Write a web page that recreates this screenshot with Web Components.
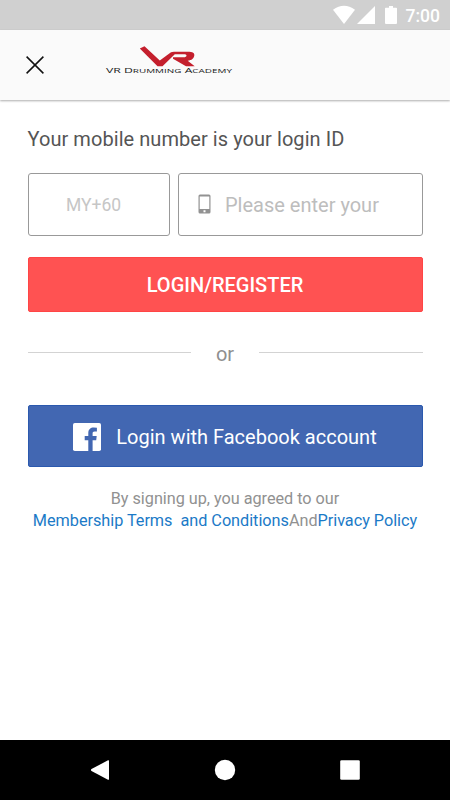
<!DOCTYPE html>
<html lang="en">
<head>
<meta charset="utf-8">
<title>Login</title>
<style>
html,body{margin:0;height:100%;background:#fff;font-family:Roboto,"Liberation Sans",sans-serif}
</style>
</head>
<body>
<login-screen></login-screen>
<script>
const define = (name, html) => {
  const t = document.createElement('template');
  t.innerHTML = html;
  customElements.define(name, class extends HTMLElement {
    constructor() {
      super();
      this.attachShadow({ mode: 'open' }).append(t.content.cloneNode(true));
    }
  });
};

define('status-bar', `
<style>
:host{display:block;height:30px;background:#d0d0d0;color:#fff}
.row{display:flex;justify-content:flex-end;align-items:center;height:30px;padding-right:10px}
svg{display:block;margin-right:8px}
span{font-size:17.5px;font-weight:500;line-height:30px;padding-top:1px}
</style>
<div class="row">
<svg width="65" height="30" viewBox="0 0 65 30" fill="#fff"><path d="M0 9.8Q11 1.8 22 9.8L11 24Z"/><path d="M24 24L42 6V24Z"/><path d="M56 6h4v1.8h3.2q.8 0 .8.8V23q0 1-1 1H53q-1 0-1-1V8.600q0-.8.8-.8H56Z"/></svg>
<span>7:00</span></div>`);

define('brand-logo', `
<style>:host{display:block}svg{display:block}text{font-family:"Open Sans","DejaVu Sans",sans-serif;fill:#222}</style>
<svg width="130" height="32" viewBox="0 0 130 32">
<path fill="#c41f2d" d="M34.800 3.500L39.500 1.200L54.800 15.500L66 7.300Q67 6.700 69 6.700H82.500C88 6.700 89.800 8 89.300 10.500C88.800 13.500 87 15.200 82.700 15.700L89.700 21.200H81L68 13.700V12.300H78.500C80.500 12.300 81.500 11.500 81.500 10.500C81.500 9.500 80.500 9.200 78.500 9.200H69.800L57.500 21.200H52.500Z"/>
<text x="1" y="27.800" font-size="6.400" textLength="126" lengthAdjust="spacingAndGlyphs">V<tspan>R</tspan> D<tspan font-size="5.200">RUMMING</tspan> A<tspan font-size="5.200">CADEMY</tspan></text>
</svg>`);

define('app-header', `
<style>
:host{display:flex;height:70px;background:#fafafa;box-shadow:0 1px 2px rgba(0,0,0,.32);align-items:flex-start}
.x{display:block;margin:26px 0 0 26px}
brand-logo{margin:15px 0 0 61px}
</style>
<svg class="x" width="18" height="18" viewBox="0 0 18 18"><path d="M.6.6L17.400 17.400M17.400.6L.6 17.400" stroke="#111" stroke-width="1.500"/></svg>
<brand-logo></brand-logo>`);

define('phone-fields', `
<style>
:host{display:flex;gap:8px;height:62px}
div{box-sizing:border-box;height:62.500px;border:1px solid #999;border-radius:3px;display:flex;align-items:center;color:#bdbdbd}
.code{width:142.500px;padding-left:37.500px;font-size:17.500px;color:#c6c6c6}
.num{flex:1;padding-left:19px;font-size:20px}
svg{margin-right:14px}
span{position:relative;top:1px}
</style>
<div class="code"><span>MY+60</span></div>
<div class="num"><svg width="13" height="20" viewBox="0 0 13 20"><path fill="#929292" fill-rule="evenodd" d="M2 .5H11Q12.500.5 12.500 2V18Q12.500 19.500 11 19.500H2Q.5 19.500.5 18V2Q.5.5 2 .5ZM1.700 2.500V15H11.300V2.500ZM5.500 16.300V18.200H7.500V16.300Z"/></svg><span>Please enter your</span></div>`);

define('action-button', `
<style>
:host{display:flex;align-items:center;justify-content:center;box-sizing:border-box;border-radius:2px;color:#fff;font-size:20px;border:1px solid var(--edge);background:var(--fill)}
::slotted(svg){display:block}
</style><slot></slot>`);

define('or-divider', `
<style>
:host{display:flex;align-items:center;justify-content:space-between;height:24px;color:#8f8f8f;font-size:20px}
i{width:163.500px;height:1px;background:#d3d3d3;position:relative;top:-1px}
span{line-height:24px;position:relative;top:1px}
</style><i></i><span>or</span><i></i>`);

define('terms-note', `
<style>
:host{display:block;text-align:center;color:#919191;font-size:16.250px;letter-spacing:-.03px;line-height:22px}
div{white-space:pre}
a{color:#1b7ac7}
</style><div>By signing up, you agreed to our</div><div><a>Membership Terms  and Conditions</a>And<a>Privacy Policy</a></div>`);

define('nav-bar', `
<style>:host{display:block;height:60px;background:#000}svg{display:block}</style>
<svg width="450" height="60" viewBox="0 0 450 60" fill="#fff"><path d="M108 20.300Q109 19.800 109 21V39Q109 40.200 108 39.700L91.500 30.900Q90.400 30 91.500 29.100Z"/><circle cx="225" cy="30" r="10.200"/><rect x="340.200" y="20.200" width="19.600" height="19.600" rx="1.300"/></svg>`);

define('login-screen', `
<style>
:host{display:flex;flex-direction:column;width:450px;height:800px;background:#fff}
main{flex:1;padding:26px 27.500px 0}
h1{margin:0;font-size:20px;font-weight:400;line-height:27px;letter-spacing:.06px;color:#555}
phone-fields{margin-top:20px}
.login{--fill:#ff5252;--edge:#ff4545;height:55px;margin-top:22px;font-weight:500}
or-divider{margin-top:29px}
.fb{--fill:#4267b2;--edge:#2b59ae;height:62px;margin-top:40px;padding-top:2px}
.fb svg{margin:-1px 15px 0 0}
terms-note{margin:21px -20px 0}
</style>
<status-bar></status-bar>
<app-header></app-header>
<main>
<h1>Your mobile number is your login ID</h1>
<phone-fields></phone-fields>
<action-button class="login"><span>LOGIN/REGISTER</span></action-button>
<or-divider></or-divider>
<action-button class="fb"><svg width="28" height="28" viewBox="0 0 28 28"><rect width="28" height="28" rx="1.800" fill="#fff"/><path fill="#4267b2" d="M15.300 28V17.200H11.700V13H15.300V10C15.300 6.400 17.500 4.500 20.700 4.500Q22.500 4.500 23.900 4.700V8.500H21.700C20 8.500 19.600 9.300 19.600 10.500V13H23.700L23.200 17.200H19.600V28Z"/></svg><span>Login with Facebook account</span></action-button>
<terms-note></terms-note>
</main>
<nav-bar></nav-bar>`);
</script>
</body>
</html>
